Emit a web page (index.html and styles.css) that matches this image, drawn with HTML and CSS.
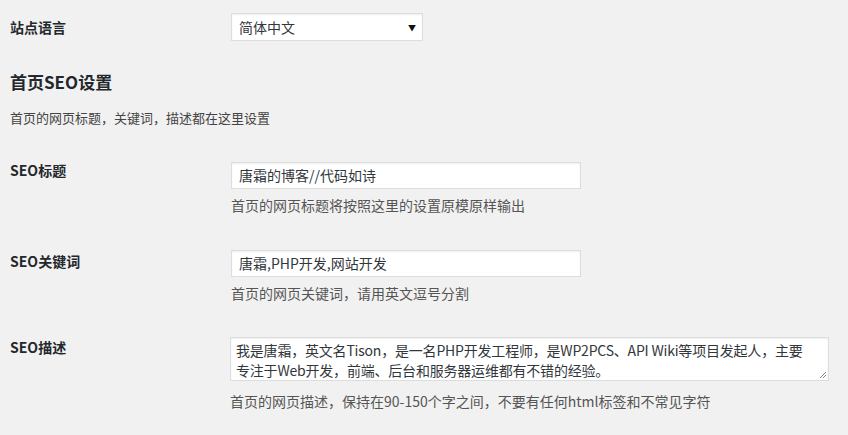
FILE: index.html
```html
<!DOCTYPE html>
<html lang="zh-CN">
<head>
<meta charset="utf-8">
<link rel="stylesheet" href="styles.css">
</head>
<body>
<div class="page">
  <div class="row row-lang">
    <div class="label">站点语言</div>
    <div class="field">
      <div class="select"><span>简体中文</span><span class="arrow">▼</span></div>
    </div>
  </div>
  <h2 class="heading">首页SEO设置</h2>
  <p class="intro">首页的网页标题，关键词，描述都在这里设置</p>

  <div class="row row-title">
    <div class="label">SEO标题</div>
    <div class="field">
      <div class="input">唐霜的博客//代码如诗</div>
      <p class="desc">首页的网页标题将按照这里的设置原模原样输出</p>
    </div>
  </div>

  <div class="row row-kw">
    <div class="label">SEO关键词</div>
    <div class="field">
      <div class="input">唐霜,PHP开发,网站开发</div>
      <p class="desc">首页的网页关键词，请用英文逗号分割</p>
    </div>
  </div>

  <div class="row row-descr">
    <div class="label">SEO描述</div>
    <div class="field">
      <div class="textarea">我是唐霜，英文名Tison，是一名PHP开发工程师，是WP2PCS、API Wiki等项目发起人，主要专注于Web开发，前端、后台和服务器运维都有不错的经验。<svg class="grip" width="9" height="9" viewBox="0 0 9 9"><path d="M8 2 L2 8 M8 5 L5 8" stroke="#888" stroke-width="1" fill="none"/></svg></div>
      <p class="desc">首页的网页描述，保持在90-150个字之间，不要有任何html标签和不常见字符</p>
    </div>
  </div>
</div>
</body>
</html>
```
FILE: styles.css
```css
html, body {
  margin: 0;
  padding: 0;
  background: #f1f1f1;
}
body {
  font-family: "Noto Sans CJK SC", "Open Sans", "Noto Sans", sans-serif;
  color: #444;
  font-size: 14px;
  width: 848px;
  height: 435px;
  overflow: hidden;
}
.page {
  padding: 13px 0 0 10px;
}
.row {
  display: flex;
  align-items: flex-start;
}
.label {
  width: 221px;
  flex: none;
  font-size: 14px;
  font-weight: 700;
  color: #23282d;
  line-height: 20px;
}
.field {
  flex: none;
}
.row-lang {
  align-items: center;
}
.select {
  box-sizing: border-box;
  width: 192px;
  height: 28px;
  background: #fff;
  border: 1px solid #ddd;
  box-shadow: inset 0 1px 2px rgba(0,0,0,0.07);
  display: flex;
  align-items: center;
  justify-content: space-between;
  padding: 0 6px 0 7px;
  color: #32373c;
  font-size: 14px;
}
.arrow {
  font-size: 8px;
  color: #111;
}
.heading {
  margin: 29px 0 0 0;
  font-size: 17px;
  line-height: 24px;
  font-weight: 700;
  color: #23282d;
}
.intro {
  margin: 14px 0 0 0;
  font-size: 13px;
  line-height: 20px;
  color: #444;
}
.row-title {
  margin-top: 32px;
}
.row-title .field {
  margin-top: 2px;
}
.input {
  box-sizing: border-box;
  width: 350px;
  height: 27px;
  background: #fff;
  border: 1px solid #ddd;
  box-shadow: inset 0 1px 2px rgba(0,0,0,0.07);
  padding: 0 7px;
  line-height: 25px;
  color: #32373c;
  font-size: 14px;
}
.desc {
  margin: 6px 0 0 0;
  line-height: 20px;
  font-size: 14px;
  color: #555;
}
.row-kw {
  margin-top: 35px;
}
.row-kw .label {
  margin-top: 1px;
}
.row-descr {
  margin-top: 34px;
}
.row-descr .field {
  margin-left: -1px;
}
.textarea {
  position: relative;
  box-sizing: border-box;
  width: 599px;
  height: 44px;
  background: #fff;
  border: 1px solid #ddd;
  box-shadow: inset 0 1px 2px rgba(0,0,0,0.07);
  padding: 2px 12px 0 5px;
  line-height: 20px;
  color: #32373c;
  font-size: 14px;
  letter-spacing: -0.2px;
}
.grip {
  position: absolute;
  right: 1px;
  bottom: 1px;
}
.row-descr .desc {
  margin-top: 10px;
}
```
